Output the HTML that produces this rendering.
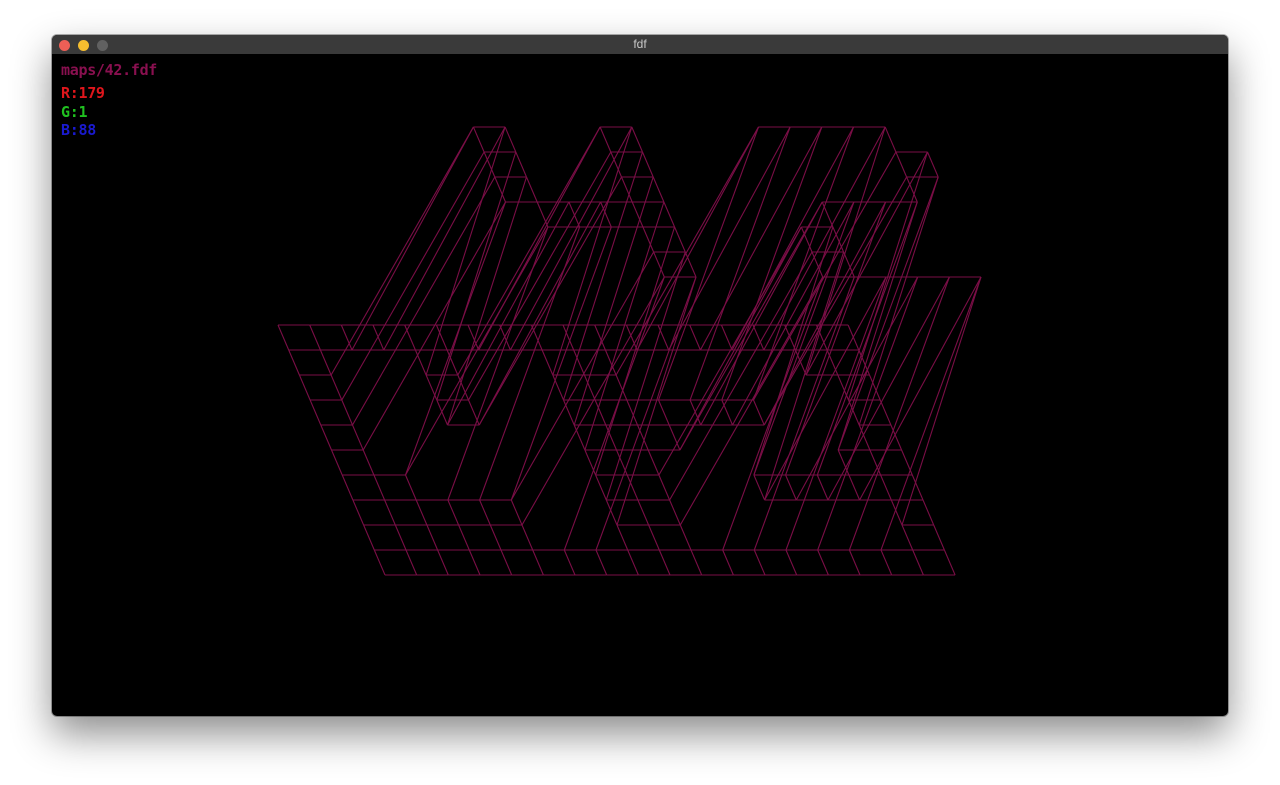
<!DOCTYPE html>
<html><head><meta charset="utf-8"><style>
html,body{margin:0;padding:0;background:#fff;width:1280px;height:785px;overflow:hidden}
.win{position:absolute;left:52px;top:35px;width:1176px;height:681px;background:#000;border-radius:5px;overflow:hidden;box-shadow:0 18px 40px rgba(0,0,0,.45),0 0 0 1px rgba(0,0,0,.3)}
.tb{position:absolute;left:0;top:0;right:0;height:19px;background:#3a3a3a;color:#c8c8c8;font:12px "Liberation Sans",sans-serif;text-align:center;line-height:19px}
.d{position:absolute;top:5px;width:11px;height:11px;border-radius:50%}
.t{position:absolute;left:9px;font:bold 15px "DejaVu Sans Mono","Liberation Mono",monospace;letter-spacing:-0.3px}
svg{position:absolute;left:0;top:0}
</style></head><body>
<div class="win">
<div class="tb">fdf<div class="d" style="left:7px;background:#ed5f56"></div><div class="d" style="left:26px;background:#f5bd2f"></div><div class="d" style="left:45px;background:#616161"></div></div>
<svg id="s" width="1176" height="681" viewBox="52 35 1176 681"></svg>
<div class="t" style="top:26px;color:#8a1050">maps/42.fdf</div>
<div class="t" style="top:49px;color:#e0161c">R:179</div>
<div class="t" style="top:68px;color:#20c020">G:1</div>
<div class="t" style="top:86px;color:#1a1ad0">B:88</div>
</div>
<script>
var m=[
"0000000000000000000",
"0000000000000000000",
"0011001100011111000",
"0011001100000001100",
"0011001100000001100",
"0011111100001111000",
"0001111100011000000",
"0000001100011000000",
"0000001100011111100",
"0000000000000000000",
"0000000000000000000"];
function P(r,c){var z=m[r][c]=="1"?10:0;return [278+10.7*r+31.67*c+11.07*z,325+25*r-24.8*z];}
var s="";
function L(a,b){s+='<line x1="'+a[0].toFixed(1)+'" y1="'+a[1].toFixed(1)+'" x2="'+b[0].toFixed(1)+'" y2="'+b[1].toFixed(1)+'"/>';}
for(var r=0;r<11;r++)for(var c=0;c<19;c++){if(c<18)L(P(r,c),P(r,c+1));if(r<10)L(P(r,c),P(r+1,c));}
document.getElementById("s").innerHTML='<g stroke="#7a0e46" stroke-width="1.1" fill="none">'+s+'</g>';
</script>
</body></html>
